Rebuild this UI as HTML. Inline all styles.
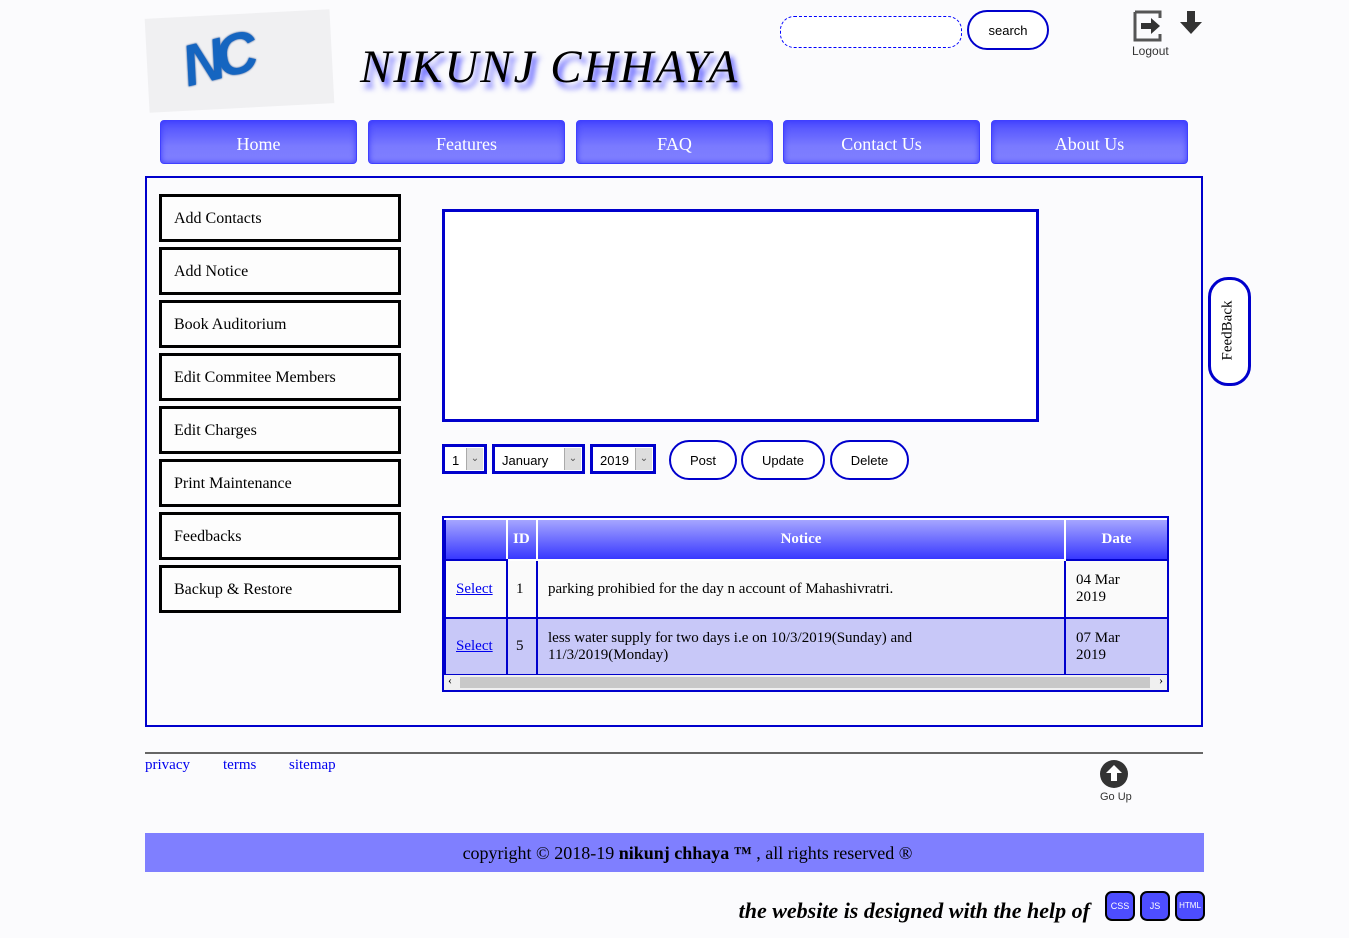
<!DOCTYPE html>
<html><head><meta charset="utf-8"><style>
body{margin:0;width:1349px;height:938px;background:#fbfbfd;position:relative;overflow:hidden;font-family:"Liberation Serif",serif;}
.a{position:absolute}
.nav{position:absolute;top:120px;height:42px;width:195px;border:1px solid #4040ff;border-radius:4px;background:linear-gradient(#4c4cff,#7a7aff 60%,#8080ff);box-shadow:inset 0 0 6px #3a3aff;color:#fff;font-size:18px;text-align:center;line-height:46px}
.sb{position:absolute;left:159px;height:42px;border:3px solid #000;font-size:16px;line-height:44px;padding-left:12px;box-sizing:content-box;width:224px;background:#fdfdfd}
.sel{position:absolute;top:444px;height:24px;border:3px solid #0000cc;background:#fff;font:13px "Liberation Sans",sans-serif;line-height:27px;padding-left:7px;box-sizing:content-box}
.sel i{position:absolute;right:1px;top:1px;width:16px;height:22px;background:#ddd;border-left:1px solid #aaa;font-style:normal;font-size:10px;text-align:center;line-height:22px;color:#555}
.btn{position:absolute;top:440px;height:36px;border:2px solid #0000cc;border-radius:20px;background:#fff;font:13px "Liberation Sans",sans-serif;text-align:center;line-height:37px}
.bd{position:absolute;top:891px;width:26px;height:26px;border:2px solid #000;border-radius:7px;background:#4d4dff;color:#fff;font:9px "Liberation Sans",sans-serif;text-align:center;line-height:26px}
td{border:2px solid #0000cc;font-size:15px;padding:0 10px}
</style></head><body>
<div class="a" style="left:147px;top:14px;width:185px;height:94px;background:#f0f0f2;transform:rotate(-3deg)"></div>
<div class="a" style="left:182px;top:26px;font:italic 900 58px 'Liberation Sans',sans-serif;color:#1565c0;letter-spacing:-8px;transform:rotate(-14deg);text-shadow:0 0 2px #0a3a8a">NC</div>
<div class="a" style="left:360px;top:40px;font:italic 47px 'Liberation Serif',serif;color:#000;text-shadow:4px 6px 6px #5050ff;letter-spacing:2px">NIKUNJ CHHAYA</div>
<div class="a" style="left:780px;top:16px;width:180px;height:30px;border:1px dashed #0000ff;border-radius:14px;background:#fff"></div>
<div class="a" style="left:967px;top:10px;width:78px;height:36px;border:2px solid #0000cc;border-radius:20px;background:#fff;font:13px 'Liberation Sans',sans-serif;text-align:center;line-height:38px">search</div>
<svg class="a" style="left:1132px;top:9px" width="34" height="34" viewBox="0 0 34 34"><path d="M3 3h25v6M28 25v6H3V3" fill="none" stroke="#555" stroke-width="3"/><path d="M9 14h10V9l9 8-9 8v-5H9z" fill="#333"/></svg>
<div class="a" style="left:1132px;top:44px;font:12px 'Liberation Sans',sans-serif;color:#333">Logout</div>
<svg class="a" style="left:1180px;top:11px" width="22" height="24" viewBox="0 0 22 24"><path d="M7 0h8v11h7L11 23 0 11h7z" fill="#333"/></svg>
<div class="nav" style="left:160px">Home</div>
<div class="nav" style="left:368px">Features</div>
<div class="nav" style="left:576px">FAQ</div>
<div class="nav" style="left:783px">Contact Us</div>
<div class="nav" style="left:991px">About Us</div>
<div class="a" style="left:145px;top:176px;width:1054px;height:547px;border:2px solid #0000cc"></div>
<div class="sb" style="top:194px">Add Contacts</div>
<div class="sb" style="top:247px">Add Notice</div>
<div class="sb" style="top:300px">Book Auditorium</div>
<div class="sb" style="top:353px">Edit Commitee Members</div>
<div class="sb" style="top:406px">Edit Charges</div>
<div class="sb" style="top:459px">Print Maintenance</div>
<div class="sb" style="top:512px">Feedbacks</div>
<div class="sb" style="top:565px">Backup &amp; Restore</div>
<div class="a" style="left:442px;top:209px;width:591px;height:207px;border:3px solid #0000cc;background:#fff"></div>
<div class="sel" style="left:442px;width:32px">1<i>⌄</i></div>
<div class="sel" style="left:492px;width:80px">January<i>⌄</i></div>
<div class="sel" style="left:590px;width:53px">2019<i>⌄</i></div>
<div class="btn" style="left:669px;width:64px">Post</div>
<div class="btn" style="left:741px;width:80px">Update</div>
<div class="btn" style="left:830px;width:75px">Delete</div>
<div class="a" style="left:442px;top:516px;width:723px;height:172px;border:2px solid #0000cc;background:#fff;overflow:hidden">
<table style="border-collapse:collapse;width:723px;table-layout:fixed;position:absolute;left:0;top:0">
<colgroup><col style="width:62px"><col style="width:30px"><col style="width:528px"><col style="width:103px"></colgroup>
<tr style="height:41px;background:linear-gradient(#a8a8ff,#3535ff);color:#fff;font-weight:bold"><td style="border-color:#fff #fff #0000cc #0000cc"></td><td style="padding:0 5px;border-color:#fff">ID</td><td style="text-align:center;border-color:#fff">Notice</td><td style="text-align:center;border-color:#fff #0000cc #0000cc #fff">Date</td></tr>
<tr style="height:58px;background:#fafafa"><td><span style="color:#00e;text-decoration:underline">Select</span></td><td style="padding:0 8px">1</td><td>parking prohibied for the day n account of Mahashivratri.</td><td style="padding-right:30px">04 Mar 2019</td></tr>
<tr style="height:57px;background:#c8c8f8"><td><span style="color:#00e;text-decoration:underline">Select</span></td><td style="padding:0 8px">5</td><td>less water supply for two days i.e on 10/3/2019(Sunday) and<br>11/3/2019(Monday)</td><td style="padding-right:30px">07 Mar 2019</td></tr>
</table>
<div class="a" style="left:0;top:157px;width:723px;height:15px;background:#f0f0f0"><div class="a" style="left:16px;top:2px;width:690px;height:11px;background:#c8c8c8"></div><span class="a" style="left:4px;top:-2px;font-size:12px">‹</span><span class="a" style="right:4px;top:-2px;font-size:12px">›</span></div>
</div>
<div class="a" style="left:1208px;top:277px;width:37px;height:103px;border:3px solid #0000cc;border-radius:20px;background:#fff"></div>
<div class="a" style="left:1193px;top:322px;width:70px;font-size:15px;transform:rotate(-90deg);text-align:center">FeedBack</div>
<div class="a" style="left:145px;top:752px;width:1058px;height:2px;background:#666"></div>
<div class="a" style="left:145px;top:757px;font-size:15px;color:#00e">privacy</div>
<div class="a" style="left:223px;top:757px;font-size:15px;color:#00e">terms</div>
<div class="a" style="left:289px;top:757px;font-size:15px;color:#00e">sitemap</div>
<svg class="a" style="left:1099px;top:759px" width="30" height="30" viewBox="0 0 30 30"><circle cx="15" cy="15" r="14" fill="#333"/><path d="M15 6l8 8h-5v8h-6v-8H7z" fill="#fff"/></svg>
<div class="a" style="left:1100px;top:791px;font:11px 'Liberation Sans',sans-serif;color:#333">Go Up</div>
<div class="a" style="left:145px;top:833px;width:1059px;height:39px;background:#7f7fff;text-align:center;font-size:18px;line-height:40px;box-sizing:border-box;padding-left:26px">copyright © 2018-19 <b>nikunj chhaya ™</b> , all rights reserved ®</div>
<div class="a" style="left:600px;top:898px;width:490px;text-align:right;font:italic bold 22px 'Liberation Serif',serif">the website is designed with the help of</div>
<div class="bd" style="left:1105px">CSS</div>
<div class="bd" style="left:1140px">JS</div>
<div class="bd" style="left:1175px;font-size:8px">HTML</div>
</body></html>
